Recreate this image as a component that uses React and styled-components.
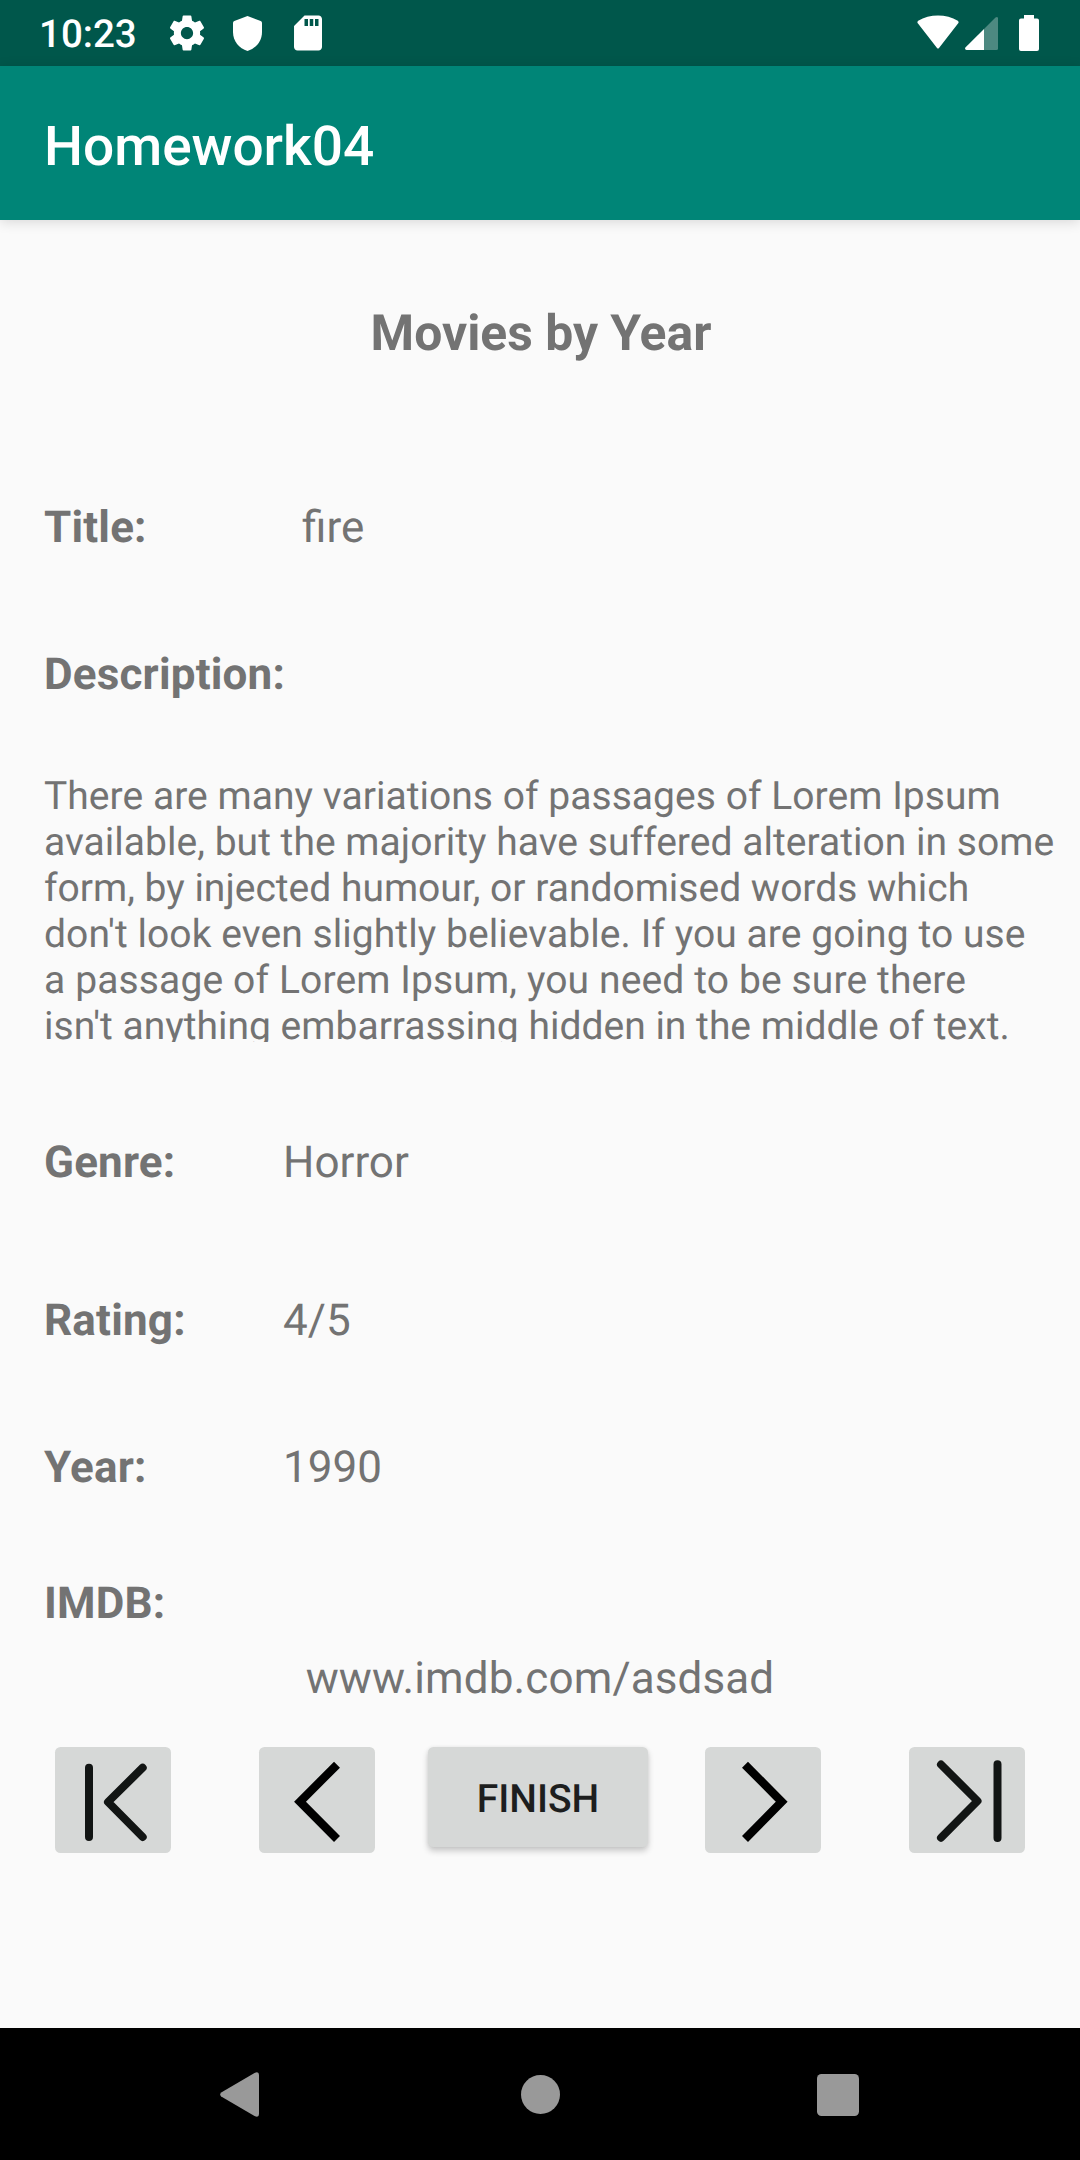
import React from "react";
import styled, { createGlobalStyle } from "styled-components";

const GlobalStyle = createGlobalStyle`
  * { box-sizing: border-box; }
  html, body { margin: 0; padding: 0; background: #fafafa; }
  body {
    font-family: Roboto, "Noto Sans", sans-serif;
    text-rendering: geometricPrecision;
  }
  button { text-rendering: inherit; }
`;

const Screen = styled.div`
  display: flex;
  flex-direction: column;
  width: 1080px;
  height: 2160px;
  overflow: hidden;
  background: #fafafa;
  color: #737373;
`;

const StatusBar = styled.header`
  display: flex;
  justify-content: space-between;
  align-items: center;
  height: 66px;
  flex: none;
  padding: 0 41px 0 39px;
  background: #00574b;
  color: #fff;
`;

const StatusGroup = styled.div`
  display: flex;
  align-items: center;
`;

const Clock = styled.span`
  width: 127px;
  font-size: 38.5px;
  line-height: 46px;
  font-weight: 500;
  padding-top: 3px;
`;

const Glyph = styled.svg`
  display: block;
  flex: none;
  width: ${(p) => p.$w}px;
  height: ${(p) => p.$h}px;
  margin-left: ${(p) => p.$gap || 0}px;
  fill: currentColor;
`;

const AppBar = styled.div`
  display: flex;
  align-items: center;
  height: 154px;
  flex: none;
  padding: 8px 44px 0;
  background: #008577;
  box-shadow: 0 2px 12px rgba(0, 0, 0, 0.14);
`;

const AppTitle = styled.h1`
  margin: 0;
  color: #fff;
  font-size: 55px;
  line-height: 64px;
  font-weight: 500;
`;

const Content = styled.main`
  display: flex;
  flex-direction: column;
  flex: 1;
  padding-top: 85px;
`;

const Heading = styled.h2`
  margin: 0 0 138px;
  padding-left: 2px;
  text-align: center;
  font-size: 49.8px;
  line-height: 58px;
  font-weight: 700;
`;

const Field = styled.div`
  display: flex;
  height: 52px;
  margin-bottom: ${(p) => p.$after}px;
  padding-left: 44px;
  font-size: 44px;
  line-height: 52px;
`;

const Label = styled.span`
  flex: none;
  width: ${(p) => p.$width || 239}px;
  font-weight: 700;
  letter-spacing: 0.18px;
`;

const Value = styled.span`
  font-weight: 400;
  font-variant-ligatures: common-ligatures;
`;

const Description = styled.div`
  height: 269px;
  margin: 0 0 94px;
  padding-left: 44px;
  overflow: hidden;
  font-size: 39px;
  line-height: 46px;
`;

const Line = styled.div`
  white-space: nowrap;
  letter-spacing: ${(p) => p.$track}px;
`;

const Link = styled.div`
  margin-bottom: 43px;
  text-align: center;
  font-size: 44px;
  line-height: 52px;
  letter-spacing: 0.12px;
`;

const Controls = styled.div`
  display: flex;
  justify-content: space-between;
  align-items: flex-start;
  padding: 0 55px;
`;

const ControlGroup = styled.div`
  display: flex;
  gap: 88px;
`;

const IconButton = styled.button`
  width: 116px;
  height: 106px;
  padding: 0;
  border: 0;
  border-radius: 5.5px;
  background: #d6d8d7;
  color: ${(p) => (p.$soft ? "#121514" : "#000")};
`;

const Arrow = styled.svg`
  display: block;
  width: 116px;
  height: 106px;
  fill: none;
  stroke: currentColor;
  stroke-width: ${(p) => (p.$round ? 8 : 8.4)};
  stroke-linecap: ${(p) => (p.$round ? "round" : "butt")};
  stroke-linejoin: ${(p) => (p.$round ? "round" : "miter")};
`;

const FinishButton = styled.button`
  width: 220px;
  height: 100px;
  margin-right: 4px;
  padding: 4px 0 0;
  border: 0;
  border-radius: 5.5px;
  background: #d6d8d7;
  box-shadow: 0 4px 6px rgba(0, 0, 0, 0.2), 0 0 4px rgba(0, 0, 0, 0.06);
  color: #1d1e1e;
  font-family: inherit;
  font-size: 39px;
  font-weight: 500;
  line-height: 46px;
`;

const NavBar = styled.nav`
  display: flex;
  align-items: center;
  justify-content: space-between;
  height: 132px;
  flex: none;
  padding: 1px 221px 0 220px;
  background: #000;
  color: #999;
`;

const fields = [
  { label: "Genre:", value: "Horror", after: 106 },
  { label: "Rating:", value: "4/5", after: 95 },
  { label: "Year:", value: "1990", after: 84 },
];

const description = [
  { text: "There are many variations of passages of Lorem Ipsum", track: 0.04 },
  { text: "available, but the majority have suffered alteration in some", track: 0.03 },
  { text: "form, by injected humour, or randomised words which", track: 0 },
  { text: "don't look even slightly believable. If you are going to use", track: 0.07 },
  { text: "a passage of Lorem Ipsum, you need to be sure there", track: 0.13 },
  { text: "isn't anything embarrassing hidden in the middle of text.", track: 0.01 },
];

export default function App() {
  return (
    <>
      <GlobalStyle />
      <Screen>
        <StatusBar>
          <StatusGroup>
            <Clock>10:23</Clock>
            <Glyph $w={42} $h={42} viewBox="0 0 24 24">
              <path d="M19.43 12.98c.04-.32.07-.64.07-.98s-.03-.66-.07-.98l2.11-1.65c.19-.15.24-.42.12-.64l-2-3.46c-.12-.22-.39-.3-.61-.22l-2.49 1c-.52-.4-1.08-.73-1.69-.98l-.38-2.65C14.46 2.18 14.25 2 14 2h-4c-.25 0-.46.18-.49.42l-.38 2.65c-.61.25-1.17.59-1.69.98l-2.49-1c-.23-.09-.49 0-.61.22l-2 3.46c-.13.22-.07.49.12.64l2.11 1.65c-.04.32-.07.65-.07.98s.03.66.07.98l-2.11 1.65c-.19.15-.24.42-.12.64l2 3.46c.12.22.39.3.61.22l2.49-1c.52.4 1.08.73 1.69.98l.38 2.65c.03.24.24.42.49.42h4c.25 0 .46-.18.49-.42l.38-2.65c.61-.25 1.17-.59 1.69-.98l2.49 1c.23.09.49 0 .61-.22l2-3.46c.12-.22.07-.49-.12-.64l-2.11-1.65zM12 15.5c-1.93 0-3.5-1.57-3.5-3.5s1.57-3.5 3.5-3.5 3.5 1.57 3.5 3.5-1.57 3.5-3.5 3.5z" />
            </Glyph>
            <Glyph $w={29} $h={35} $gap={25} viewBox="0 0 29 35">
              <path d="M14.5 0 27.7 4.9Q29 5.4 29 6.8V16C29 25 23 32.5 14.5 35 6 32.5 0 25 0 16V6.8Q0 5.4 1.3 4.9Z" />
            </Glyph>
            <Glyph $w={42} $h={42} $gap={25} viewBox="0 0 24 24">
              <path d="M18 2h-8L4.02 8 4 20c0 1.1.9 2 2 2h12c1.1 0 2-.9 2-2V4c0-1.1-.9-2-2-2zm-6 6h-2V4h2v4zm3 0h-2V4h2v4zm3 0h-2V4h2v4z" />
            </Glyph>
          </StatusGroup>
          <StatusGroup>
            <Glyph $w={42} $h={36} viewBox="0 0 42 36">
              <path d="M1 8.5Q-.3 7 1.2 5.8C12.5-1.1 29.5-1.1 40.8 5.8Q42.3 7 41 8.5L22 33Q21 34.2 20 33Z" />
            </Glyph>
            <Glyph $w={33} $h={36} $gap={6} viewBox="0 0 33 36">
              <path d="M19 14V35H1.5Q-.6 34.5.4 32.5Z" />
              <path opacity=".3" d="M19 14 30.5 2.5Q32.5 1.3 33 3V33.5Q33 35 31.5 35H19Z" />
            </Glyph>
            <Glyph $w={20} $h={36} $gap={21} viewBox="0 0 20 36">
              <path d="M5 0H15V3.5H18Q20 3.5 20 5.5V34Q20 36 18 36H2Q0 36 0 34V5.5Q0 3.5 2 3.5H5Z" />
            </Glyph>
          </StatusGroup>
        </StatusBar>
        <AppBar>
          <AppTitle>Homework04</AppTitle>
        </AppBar>
        <Content>
          <Heading>Movies by Year</Heading>
          <Field $after={95}>
            <Label $width={258}>Title:</Label>
            <Value>fire</Value>
          </Field>
          <Field $after={73}>
            <Label>Description:</Label>
          </Field>
          <Description>
            {description.map((line) => (
              <Line key={line.text} $track={line.track}>
                {line.text}
              </Line>
            ))}
          </Description>
          {fields.map((f) => (
            <Field key={f.label} $after={f.after}>
              <Label>{f.label}</Label>
              <Value>{f.value}</Value>
            </Field>
          ))}
          <Field $after={23}>
            <Label>IMDB:</Label>
          </Field>
          <Link>www.imdb.com/asdsad</Link>
          <Controls>
            <ControlGroup>
              <IconButton $soft aria-label="First">
                <Arrow $round viewBox="0 0 116 106">
                  <path d="M34 20.7V90M87.700 20.700 53 55 87.700 90" />
                </Arrow>
              </IconButton>
              <IconButton aria-label="Previous">
                <Arrow viewBox="0 0 116 106">
                  <path d="M78 17.700 41 54.700 78 92" />
                </Arrow>
              </IconButton>
            </ControlGroup>
            <FinishButton>FINISH</FinishButton>
            <ControlGroup>
              <IconButton aria-label="Next">
                <Arrow viewBox="0 0 116 106">
                  <path d="M40 17.700 76.700 54.700 40 92" />
                </Arrow>
              </IconButton>
              <IconButton $soft aria-label="Last">
                <Arrow $round viewBox="0 0 116 106">
                  <path d="M32 17.500 68.500 54 32 90.700M88.500 17.300V91" />
                </Arrow>
              </IconButton>
            </ControlGroup>
          </Controls>
        </Content>
        <NavBar>
          <Glyph $w={39} $h={45} viewBox="0 0 39 45">
            <path d="M1.2 20.5 34.5 1Q39-1 39 3V42Q39 46 34.5 44L1.2 24.5Q-.8 22.5 1.2 20.5Z" />
          </Glyph>
          <Glyph $w={39} $h={39} $gap={4} viewBox="0 0 39 39">
            <circle cx="19.5" cy="19.5" r="19.5" />
          </Glyph>
          <Glyph $w={42} $h={42} viewBox="0 0 42 42">
            <rect width="42" height="42" rx="4.5" />
          </Glyph>
        </NavBar>
      </Screen>
    </>
  );
}
